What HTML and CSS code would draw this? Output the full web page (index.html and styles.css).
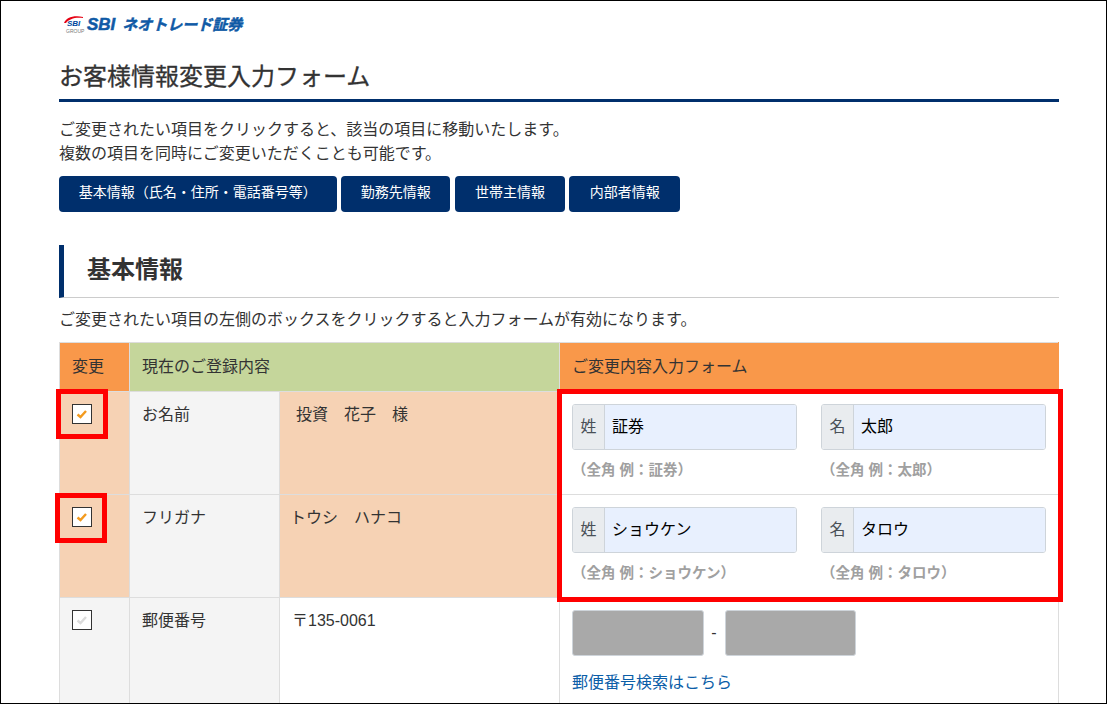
FILE: index.html
```html
<!DOCTYPE html>
<html lang="ja">
<head>
    <meta charset="UTF-8">
    <title>お客様情報変更入力フォーム</title>
    <link rel="stylesheet" href="styles.css">
</head>
<body>

<div class="frame">
    <div class="container">
        <!-- Logo -->
        <div class="logo">
            <div class="logo-mark">
                <svg width="21" height="9" viewBox="0 0 21 9"><path d="M1 8 C3 3 10 0 20 2 L20 3 C12 2 6 4 3 8 Z" fill="#e60012"/></svg>
                <span class="logo-sbi">SBI</span>
                <span class="logo-group">GROUP</span>
            </div>
            <span class="logo-text"><span class="logo-text-sbi">SBI</span>ネオトレード証券</span>
        </div>

        <h1>お客様情報変更入力フォーム</h1>

        <p class="lead">ご変更されたい項目をクリックすると、該当の項目に移動いたします。<br>複数の項目を同時にご変更いただくことも可能です。</p>

        <div class="nav-buttons">
            <a class="nav-button nav-wide">基本情報（氏名・住所・電話番号等）</a>
            <a class="nav-button nav-work">勤務先情報</a>
            <a class="nav-button nav-head">世帯主情報</a>
            <a class="nav-button nav-insider">内部者情報</a>
        </div>

        <h2>基本情報</h2>
        <p class="note">ご変更されたい項目の左側のボックスをクリックすると入力フォームが有効になります。</p>

        <table class="form-table">
            <colgroup>
                <col class="col-check">
                <col class="col-label">
                <col class="col-current">
                <col class="col-input">
            </colgroup>
            <tr class="head-row">
                <th class="th-orange">変更</th>
                <th class="th-green" colspan="2">現在のご登録内容</th>
                <th class="th-orange th-last">ご変更内容入力フォーム</th>
            </tr>
            <tr class="row-name">
                <td class="cell-active"><span class="check"><svg width="14" height="12" viewBox="0 0 14 12"><path d="M2.5 6.5 L5.5 9 L11 3" fill="none" stroke="#f39a1e" stroke-width="2.4"/></svg></span></td>
                <td class="cell-label">お名前</td>
                <td class="cell-active cell-name">投資　花子　様</td>
                <td class="cell-input">
                    <div class="field-pair">
                        <div class="field">
                            <div class="input-group"><span class="addon">姓</span><span class="input-box">証券</span></div>
                            <div class="hint">（全角 例：証券）</div>
                        </div>
                        <div class="field">
                            <div class="input-group"><span class="addon">名</span><span class="input-box">太郎</span></div>
                            <div class="hint">（全角 例：太郎）</div>
                        </div>
                    </div>
                </td>
            </tr>
            <tr class="row-kana">
                <td class="cell-active"><span class="check"><svg width="14" height="12" viewBox="0 0 14 12"><path d="M2.5 6.5 L5.5 9 L11 3" fill="none" stroke="#f39a1e" stroke-width="2.4"/></svg></span></td>
                <td class="cell-label">フリガナ</td>
                <td class="cell-active cell-kana">トウシ　ハナコ</td>
                <td class="cell-input">
                    <div class="field-pair">
                        <div class="field">
                            <div class="input-group"><span class="addon">姓</span><span class="input-box">ショウケン</span></div>
                            <div class="hint">（全角 例：ショウケン）</div>
                        </div>
                        <div class="field">
                            <div class="input-group"><span class="addon">名</span><span class="input-box">タロウ</span></div>
                            <div class="hint">（全角 例：タロウ）</div>
                        </div>
                    </div>
                </td>
            </tr>
            <tr class="row-zip">
                <td class="cell-off"><span class="check"><svg width="14" height="12" viewBox="0 0 14 12"><path d="M2.5 6.5 L5.5 9 L11 3" fill="none" stroke="#dcdcdc" stroke-width="2.4"/></svg></span></td>
                <td class="cell-label">郵便番号</td>
                <td class="cell-zip">〒135-0061</td>
                <td class="cell-input">
                    <div class="zip-inputs">
                        <span class="zip-box"></span>
                        <span class="zip-dash">-</span>
                        <span class="zip-box"></span>
                    </div>
                    <a class="zip-link">郵便番号検索はこちら</a>
                </td>
            </tr>
        </table>
    </div>

    <!-- Red annotation boxes -->
    <div class="mark mark-check1"></div>
    <div class="mark mark-check2"></div>
    <div class="mark mark-inputs"></div>
</div>

</body>
</html>
```

FILE: styles.css
```css
html, body {
    margin: 0;
    padding: 0;
    height: 100%;
    overflow: hidden;
}

body {
    font-family: "Liberation Sans", "Noto Sans CJK JP", sans-serif;
    font-size: 16px;
    color: #333;
    background-color: #fff;
}

.frame {
    position: relative;
    box-sizing: border-box;
    height: 704px;
    border: 1px solid #000;
    overflow: hidden;
}

.container {
    width: 1000px;
    margin-left: 58px;
}

/* Logo */
.logo {
    display: flex;
    align-items: flex-start;
    height: 35px;
    padding: 14px 0 0 4px;
    box-sizing: border-box;
}

.logo-mark {
    position: relative;
    width: 21px;
    height: 20px;
    margin-right: 3px;
}

.logo-mark svg {
    position: absolute;
    left: 0;
    top: 0;
}

.logo-sbi {
    position: absolute;
    left: 4px;
    top: 5px;
    font: italic bold 8px/8px "Liberation Sans", sans-serif;
    color: #00479d;
}

.logo-group {
    position: absolute;
    left: 3px;
    top: 14px;
    font: 5px/5px "Liberation Sans", sans-serif;
    color: #777;
}

.logo-text {
    font: italic bold 15px/18px "Noto Sans CJK JP", sans-serif;
    color: #0f5aa6;
    -webkit-text-stroke: 0.5px #0f5aa6;
}

.logo-text-sbi {
    margin-right: 7px;
    font: italic bold 17px/18px "Liberation Sans", sans-serif;
}

h1 {
    margin: 0;
    height: 66px;
    box-sizing: border-box;
    border-bottom: 3px solid #002f6c;
    padding-top: 23px;
    font-size: 24px;
    line-height: 36px;
    font-weight: normal;
    -webkit-text-stroke: 0.3px #333;
}

.lead {
    margin: 16px 0 0;
    line-height: 24px;
}

.nav-buttons {
    display: flex;
    gap: 4.5px;
    margin-top: 10px;
}

.nav-button {
    display: block;
    height: 36px;
    line-height: 33px;
    text-align: center;
    font-size: 14px;
    color: #fff;
    background-color: #002f6c;
    border-radius: 4px;
}

.nav-wide { width: 277.7px; }
.nav-work { width: 109.3px; }
.nav-head { width: 110px; }
.nav-insider { width: 110.5px; }

h2 {
    margin: 33px 0 0;
    height: 53px;
    box-sizing: border-box;
    border-left: 5px solid #002f6c;
    border-bottom: 1px solid #ccc;
    padding-left: 23px;
    font-size: 24px;
    line-height: 49px;
    font-weight: bold;
}

.note {
    margin: 0;
    height: 44px;
    line-height: 44px;
}

.form-table {
    width: 1000px;
    border-collapse: collapse;
    table-layout: fixed;
}

.col-check { width: 70px; }
.col-label { width: 150px; }
.col-current { width: 280px; }
.col-input { width: 499px; }

th, td {
    border: 1px solid #ddd;
    text-align: left;
    vertical-align: top;
    font-weight: normal;
    padding: 12px;
}

.head-row { height: 49px; }
.head-row th { vertical-align: middle; padding: 0 12px 5px; }
.th-orange { background-color: #f9984a; }
.th-green { background-color: #c5d69b; }
.head-row .th-last { border-right-color: #f9984a; }

.row-name { height: 103px; }
.row-kana { height: 103px; }
.row-zip { height: 120px; }

.row-name td, .row-kana td, .row-zip td { padding-top: 12px; padding-bottom: 0; line-height: 22px; }

.cell-active { background-color: #f6d2b4; }
.cell-label { background-color: #f4f4f4; }
.cell-off { background-color: #f4f4f4; }
.cell-input { background-color: #fff; }
.cell-name { padding-left: 16px; }
.cell-kana { padding-left: 10px; }

.check {
    display: flex;
    align-items: center;
    justify-content: center;
    width: 20px;
    height: 20px;
    box-sizing: border-box;
    border: 1px solid #333;
    background-color: #fff;
}

.field-pair {
    display: flex;
    gap: 24px;
}

.field { width: 225px; }

.input-group {
    display: flex;
    height: 46px;
    box-sizing: border-box;
    border: 1px solid #ced4da;
    border-radius: 3px;
    overflow: hidden;
    line-height: 44px;
}

.addon {
    width: 31px;
    text-align: center;
    color: #495057;
    background-color: #e9ecef;
    border-right: 1px solid #ced4da;
}

.input-box {
    flex: 1;
    padding-left: 7px;
    color: #000;
    background-color: #e8f0fe;
}

.hint {
    margin-top: 9px;
    font-size: 14.5px;
    font-weight: bold;
    color: #a0a0a0;
}

.zip-inputs {
    display: flex;
    align-items: center;
}

.zip-box {
    width: 131.5px;
    height: 46px;
    box-sizing: border-box;
    border: 1px solid #ced4da;
    background-color: #a9a9a9;
    border-radius: 3px;
}

.zip-dash {
    width: 21px;
    text-align: center;
}

.zip-link {
    display: block;
    margin-top: 16px;
    color: #0b5ea8;
}

/* Red annotation boxes */
.mark {
    position: absolute;
    box-sizing: border-box;
    border: 5px solid #f00;
}

.mark-check1 { left: 55px; top: 388px; width: 52px; height: 50px; }
.mark-check2 { left: 54px; top: 492px; width: 52px; height: 50px; }
.mark-inputs { left: 556px; top: 388px; width: 506px; height: 213px; }
```
